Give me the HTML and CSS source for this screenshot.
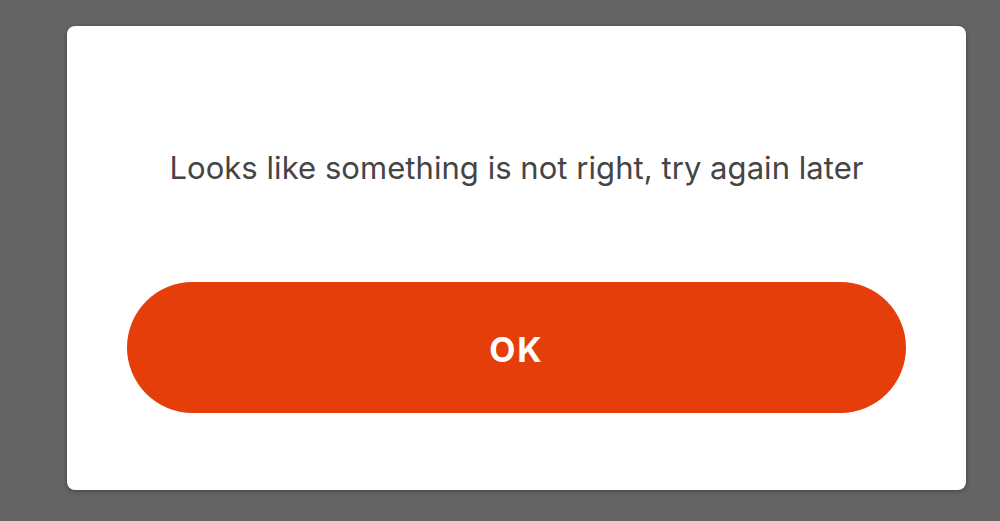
FILE: index.html
```html
<!doctype html>
<html lang="en">
<head>
<meta charset="UTF-8">
<title>Error</title>
<link rel="stylesheet" href="styles.css">
</head>
<body>
	<div class="dialog">
		<p class="message">Looks like something is not right, try again later</p>
		<button class="bt_ok">OK</button>
	</div>
</body>
</html>
```

FILE: styles.css
```css
body{
	margin:0;
	height:521px;
	background:#646464;
	font-family:Inter, "Noto Sans", sans-serif;
	overflow:hidden;
}
.dialog{
	width:899px;
	height:464px;
	box-sizing:border-box;
	margin:26px 0 0 67px;
	padding:124px 60px 0 60px;
	background:#ffffff;
	border-radius:8px;
	box-shadow:0 1px 4px rgba(0,0,0,0.35);
}
.message{
	margin:0;
	height:36px;
	line-height:36px;
	font-size:31px;
	letter-spacing:0.05px;
	color:#454545;
	text-align:center;
}
.bt_ok{
	display:block;
	width:100%;
	height:131px;
	margin-top:96px;
	padding-top:4px;
	border:none;
	border-radius:66px;
	background:#e63e0b;
	color:#fff;
	font-family:inherit;
	font-size:34px;
	font-weight:700;
	letter-spacing:2px;
}
```
